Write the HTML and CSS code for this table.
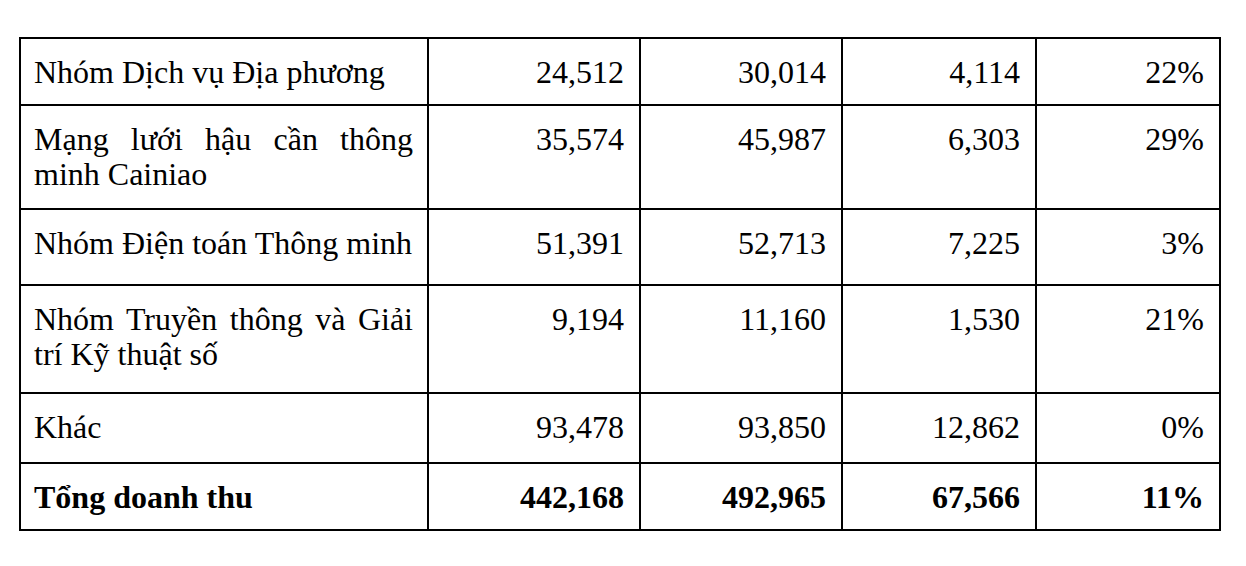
FILE: index.html
```html
<!DOCTYPE html>
<html lang="vi">
<head>
<meta charset="utf-8">
<title>Doanh thu</title>
<link rel="stylesheet" href="styles.css">
</head>
<body>
<table class="rev">
  <colgroup>
    <col class="c-name">
    <col class="c-a">
    <col class="c-b">
    <col class="c-c">
    <col class="c-d">
  </colgroup>
  <tbody>
    <tr class="r1">
      <td class="name">Nhóm Dịch vụ Địa phương</td>
      <td class="num">24,512</td>
      <td class="num">30,014</td>
      <td class="num">4,114</td>
      <td class="num">22%</td>
    </tr>
    <tr class="r2">
      <td class="name">Mạng lưới hậu cần thông minh Cainiao</td>
      <td class="num">35,574</td>
      <td class="num">45,987</td>
      <td class="num">6,303</td>
      <td class="num">29%</td>
    </tr>
    <tr class="r3">
      <td class="name">Nhóm Điện toán Thông minh</td>
      <td class="num">51,391</td>
      <td class="num">52,713</td>
      <td class="num">7,225</td>
      <td class="num">3%</td>
    </tr>
    <tr class="r4">
      <td class="name">Nhóm Truyền thông và Giải trí Kỹ thuật số</td>
      <td class="num">9,194</td>
      <td class="num">11,160</td>
      <td class="num">1,530</td>
      <td class="num">21%</td>
    </tr>
    <tr class="r5">
      <td class="name">Khác</td>
      <td class="num">93,478</td>
      <td class="num">93,850</td>
      <td class="num">12,862</td>
      <td class="num">0%</td>
    </tr>
    <tr class="r6 total">
      <td class="name">Tổng doanh thu</td>
      <td class="num">442,168</td>
      <td class="num">492,965</td>
      <td class="num">67,566</td>
      <td class="num">11%</td>
    </tr>
  </tbody>
</table>
</body>
</html>
```
FILE: styles.css
```css
html, body {
  margin: 0;
  padding: 0;
  background: #ffffff;
}
body {
  padding: 37px 0 0 19px;
  font-family: "Times New Roman", Tinos, "Liberation Serif", "Nimbus Roman", "DejaVu Serif", serif;
  color: #000000;
}
.rev {
  border-collapse: collapse;
  table-layout: fixed;
  width: 1202px;
  font-size: 32px;
  line-height: 35px;
}
.c-name { width: 408px; }
.c-a { width: 212px; }
.c-b { width: 202px; }
.c-c { width: 194px; }
.c-d { width: 184px; }
.rev td {
  border: 2px solid #000000;
  vertical-align: top;
  padding: 16px 15px 0 13px;
  box-sizing: border-box;
  font-family: "Times New Roman", Tinos, "Liberation Serif", "Nimbus Roman", "DejaVu Serif", serif;
}
.rev td.name {
  text-align: justify;
  padding-right: 14px;
}
.rev td.num {
  text-align: right;
}
.r1 { height: 67px; }
.r2 { height: 104px; }
.r3 { height: 76px; }
.r4 { height: 108px; }
.r5 { height: 70px; }
.r6 { height: 67px; }
.total td { font-weight: bold; }
```
